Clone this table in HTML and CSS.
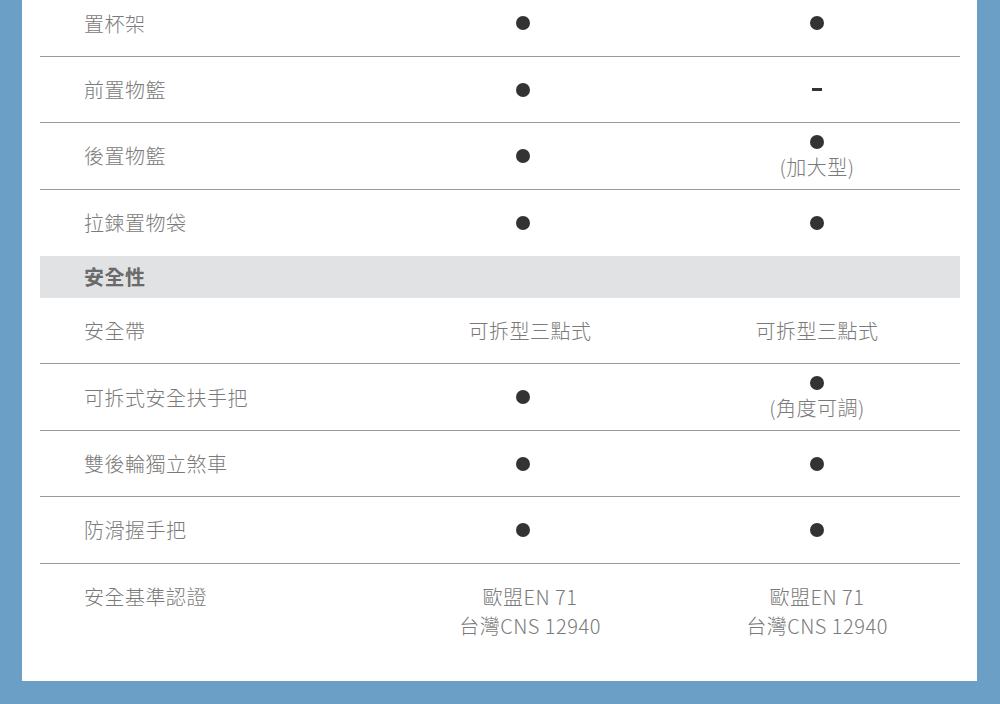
FILE: index.html
```html
<!DOCTYPE html>
<html lang="zh-Hant">
<head>
<meta charset="utf-8">
<link rel="stylesheet" href="styles.css">
</head>
<body>
<div class="panel">
  <div class="table">
    <div class="row"><div class="label">置杯架</div><div class="cell c2"><span class="dot"></span></div><div class="cell c3"><span class="dot"></span></div></div>
    <div class="row"><div class="label">前置物籃</div><div class="cell c2"><span class="dot"></span></div><div class="cell c3"><span class="dash"></span></div></div>
    <div class="row"><div class="label">後置物籃</div><div class="cell c2"><span class="dot"></span></div><div class="cell c3 stack"><span class="dot"></span><span class="note">(加大型)</span></div></div>
    <div class="row noline"><div class="label">拉鍊置物袋</div><div class="cell c2"><span class="dot"></span></div><div class="cell c3"><span class="dot"></span></div></div>
    <div class="section">安全性</div>
    <div class="row"><div class="label">安全帶</div><div class="cell c2 txt">可拆型三點式</div><div class="cell c3 txt">可拆型三點式</div></div>
    <div class="row"><div class="label">可拆式安全扶手把</div><div class="cell c2"><span class="dot"></span></div><div class="cell c3 stack"><span class="dot"></span><span class="note">(角度可調)</span></div></div>
    <div class="row"><div class="label">雙後輪獨立煞車</div><div class="cell c2"><span class="dot"></span></div><div class="cell c3"><span class="dot"></span></div></div>
    <div class="row"><div class="label">防滑握手把</div><div class="cell c2"><span class="dot"></span></div><div class="cell c3"><span class="dot"></span></div></div>
    <div class="row last"><div class="label">安全基準認證</div><div class="cell c2 txt">歐盟EN 71<br>台灣CNS 12940</div><div class="cell c3 txt">歐盟EN 71<br>台灣CNS 12940</div></div>
  </div>
</div>
</body>
</html>
```

FILE: styles.css
```css
html, body {
  margin: 0;
  padding: 0;
}
body {
  background: #6c9fc6;
  width: 1000px;
  height: 704px;
  overflow: hidden;
  font-family: "Noto Sans CJK TC", "Noto Sans", sans-serif;
  font-weight: 300;
  color: #7a7a7a;
  font-size: 20px;
  line-height: 29px;
}
.panel {
  background: #ffffff;
  margin: -9.5px 23px 0 22px;
  padding: 0 17px 0 18px;
}
.table {
  display: flex;
  flex-direction: column;
}
.row {
  display: grid;
  grid-template-columns: 346px 288px 286px;
  height: 66.4px;
  box-sizing: border-box;
  border-bottom: 1px solid #9a9a9a;
  align-items: center;
}
.row.noline {
  border-bottom: none;
}
.row.last {
  border-bottom: none;
  height: 117px;
  align-items: start;
  padding-top: 18px;
}
.label {
  padding-left: 44px;
  letter-spacing: 0.5px;
}
.cell {
  display: flex;
  justify-content: center;
  align-items: center;
  text-align: center;
}
.cell.txt {
  letter-spacing: 0.5px;
}
.cell.stack {
  flex-direction: column;
  gap: 3px;
  padding-top: 4px;
}
.dot {
  display: block;
  width: 14px;
  height: 14px;
  border-radius: 50%;
  background: #333333;
}
.c2 .dot {
  margin-right: 15px;
}
.dash {
  display: block;
  width: 10px;
  height: 2.5px;
  background: #333333;
}
.note {
  letter-spacing: 0.5px;
}
.section {
  background: #e1e2e4;
  height: 42px;
  display: flex;
  align-items: center;
  padding-left: 44px;
  padding-bottom: 2px;
  box-sizing: border-box;
  font-weight: 700;
  color: #6a6a6a;
  letter-spacing: 0.5px;
}
```
